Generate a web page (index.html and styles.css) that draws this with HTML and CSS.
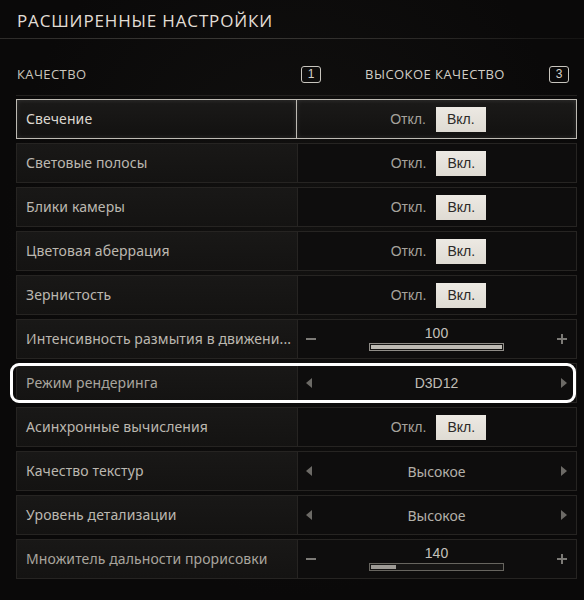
FILE: index.html
```html
<!DOCTYPE html>
<html lang="ru">
<head>
<meta charset="utf-8">
<link rel="stylesheet" href="styles.css">
</head>
<body>
<div class="page">
  <h1 class="title">РАСШИРЕННЫЕ НАСТРОЙКИ</h1>
  <div class="divider"></div>
  <div class="panel">
    <div class="head">
      <div class="head-label">КАЧЕСТВО</div>
      <div class="head-value">
        <span class="key">1</span>
        <span class="head-preset">ВЫСОКОЕ КАЧЕСТВО</span>
        <span class="key">3</span>
      </div>
    </div>

    <div class="row active">
      <div class="label">Свечение</div>
      <div class="value toggle"><span class="off">Откл.</span><span class="on">Вкл.</span></div>
    </div>
    <div class="row">
      <div class="label">Световые полосы</div>
      <div class="value toggle"><span class="off">Откл.</span><span class="on">Вкл.</span></div>
    </div>
    <div class="row">
      <div class="label">Блики камеры</div>
      <div class="value toggle"><span class="off">Откл.</span><span class="on">Вкл.</span></div>
    </div>
    <div class="row">
      <div class="label">Цветовая аберрация</div>
      <div class="value toggle"><span class="off">Откл.</span><span class="on">Вкл.</span></div>
    </div>
    <div class="row">
      <div class="label">Зернистость</div>
      <div class="value toggle"><span class="off">Откл.</span><span class="on">Вкл.</span></div>
    </div>
    <div class="row">
      <div class="label">Интенсивность размытия в движени...</div>
      <div class="value slider">
        <span class="minus"></span>
        <div class="slider-mid">
          <div class="num">100</div>
          <div class="bar"><div class="fill" style="width:100%"></div></div>
        </div>
        <span class="plus"></span>
      </div>
    </div>
    <div class="row focused">
      <div class="label dim">Режим рендеринга</div>
      <div class="value select">
        <svg class="arrow" width="6" height="10" viewBox="0 0 6 10"><polygon points="6,0 6,10 0,5"/></svg>
        <span class="sel-text">D3D12</span>
        <svg class="arrow" width="6" height="10" viewBox="0 0 6 10"><polygon points="0,0 0,10 6,5"/></svg>
      </div>
    </div>
    <div class="row">
      <div class="label">Асинхронные вычисления</div>
      <div class="value toggle"><span class="off">Откл.</span><span class="on">Вкл.</span></div>
    </div>
    <div class="row">
      <div class="label">Качество текстур</div>
      <div class="value select">
        <svg class="arrow" width="6" height="10" viewBox="0 0 6 10"><polygon points="6,0 6,10 0,5"/></svg>
        <span class="sel-text word">Высокое</span>
        <svg class="arrow" width="6" height="10" viewBox="0 0 6 10"><polygon points="0,0 0,10 6,5"/></svg>
      </div>
    </div>
    <div class="row">
      <div class="label">Уровень детализации</div>
      <div class="value select">
        <svg class="arrow" width="6" height="10" viewBox="0 0 6 10"><polygon points="6,0 6,10 0,5"/></svg>
        <span class="sel-text word">Высокое</span>
        <svg class="arrow" width="6" height="10" viewBox="0 0 6 10"><polygon points="0,0 0,10 6,5"/></svg>
      </div>
    </div>
    <div class="row">
      <div class="label dim">Множитель дальности прорисовки</div>
      <div class="value slider">
        <span class="minus"></span>
        <div class="slider-mid">
          <div class="num">140</div>
          <div class="bar dark"><div class="fill" style="width:19%"></div></div>
        </div>
        <span class="plus"></span>
      </div>
    </div>
  </div>
</div>
</body>
</html>
```

FILE: styles.css
```css
* { box-sizing: border-box; }

html, body {
  margin: 0;
  padding: 0;
  background: #0b0a0a;
}

body {
  width: 584px;
  height: 600px;
  overflow: hidden;
  font-family: "Noto Sans", "Open Sans", sans-serif;
  color: #bdb9b1;
  background: radial-gradient(ellipse at 50% 40%, #121110 0%, #0a0909 70%);
}

.title {
  margin: 0;
  height: 38px;
  padding: 10px 0 0 17px;
  font-family: "Open Sans", "Noto Sans", sans-serif;
  font-size: 17px;
  line-height: 22px;
  font-weight: 400;
  letter-spacing: 0.85px;
  color: #e2ded6;
}

.divider {
  height: 1px;
  background: linear-gradient(90deg, #2e2c2a 0%, #3a3835 40%, #2a2826 75%, #151413 100%);
}

.panel {
  padding: 0 7px 0 16px;
}

.head {
  height: 57px;
  display: grid;
  grid-template-columns: 281px 1fr;
  align-items: end;
  padding-bottom: 11px;
  border-bottom: 1px solid #23211f;
  margin-bottom: 3px;
}

.head-label {
  font-family: "Open Sans", "Noto Sans", sans-serif;
  font-size: 13px;
  line-height: 20px;
  color: #c9c5bd;
  padding-left: 1px;
  letter-spacing: 0.4px;
}

.head-value {
  display: flex;
  align-items: center;
  justify-content: space-between;
  padding: 0 8px 0 4px;
  height: 20px;
}

.head-preset {
  font-family: "Open Sans", "Noto Sans", sans-serif;
  font-size: 13px;
  color: #d2cec6;
  letter-spacing: 0.45px;
}

.key {
  width: 20px;
  height: 17px;
  border: 1.5px solid #c8c5be;
  border-radius: 3px;
  font-family: "Liberation Sans", sans-serif;
  font-size: 12px;
  line-height: 14px;
  text-align: center;
  color: #d6d2cb;
}

.row {
  position: relative;
  height: 40px;
  margin-bottom: 4px;
  display: grid;
  grid-template-columns: 281px 1fr;
}

.label {
  border: 1px solid #262422;
  border-right: none;
  background: linear-gradient(180deg, #191817 0%, #141312 100%);
  padding: 0 6px 0 9px;
  font-size: 14px;
  line-height: 38px;
  white-space: nowrap;
  overflow: hidden;
  color: #bcb8b0;
  letter-spacing: 0.1px;
}

.label.dim { color: #a9a59e; }

.value {
  border: 1px solid #262422;
  background: #0e0d0d;
  display: flex;
  align-items: center;
}

.row.active .label,
.row.active .value {
  border-color: #bdbab3;
  background: linear-gradient(180deg, #1b1a19 0%, #121110 100%);
  box-shadow: inset 0 0 5px rgba(255, 255, 255, 0.12);
}
.row.active .label { color: #dcd8d0; border-right: 1px solid #bdbab3; }
.row.active .value { border-left: none; }

.row.focused::after {
  content: "";
  position: absolute;
  left: -6px;
  right: 1px;
  top: 0;
  bottom: 0;
  border: 3px solid #ffffff;
  border-radius: 9px;
  pointer-events: none;
}

.toggle {
  justify-content: center;
  gap: 10px;
  padding-left: 3px;
  font-family: "Liberation Sans", sans-serif;
  font-size: 14px;
}

.off {
  color: #a5a29c;
}

.on {
  width: 50px;
  height: 25px;
  line-height: 25px;
  text-align: center;
  background: linear-gradient(180deg, #ece9e3 0%, #dfdbd3 100%);
  color: #2b2927;
}

.slider {
  justify-content: space-between;
  align-items: stretch;
  padding: 0 9px 0 8px;
}

.minus, .plus {
  position: relative;
  width: 10px;
  align-self: center;
  height: 10px;
}
.minus::before, .plus::before {
  content: "";
  position: absolute;
  left: 0;
  right: 0;
  top: 4px;
  height: 2px;
  background: #7c7a76;
}
.plus::after {
  content: "";
  position: absolute;
  top: 0;
  bottom: 0;
  left: 4px;
  width: 2px;
  background: #7c7a76;
}

.slider-mid {
  width: 135px;
  margin-top: 5px;
  display: flex;
  flex-direction: column;
  align-items: center;
}

.num {
  font-family: "Liberation Sans", sans-serif;
  font-size: 14px;
  line-height: 16px;
  color: #c4c1ba;
}

.bar {
  margin-top: 2px;
  width: 135px;
  height: 8px;
  border: 1px solid #8f8c87;
  background: #161514;
  padding: 1px;
}
.bar.dark { border-color: #67655f; }

.fill {
  height: 100%;
  background: #bdbab3;
}
.bar.dark .fill { background: #9e9b96; }

.select {
  justify-content: space-between;
  padding: 0 9px 0 8px;
}

.arrow { fill: #6c6a66; }

.sel-text {
  font-family: "Liberation Sans", sans-serif;
  font-size: 14px;
  color: #c0bdb6;
}
.sel-text.word {
  font-family: "Noto Sans", sans-serif;
  font-size: 14px;
  color: #b3b0a9;
}
```
